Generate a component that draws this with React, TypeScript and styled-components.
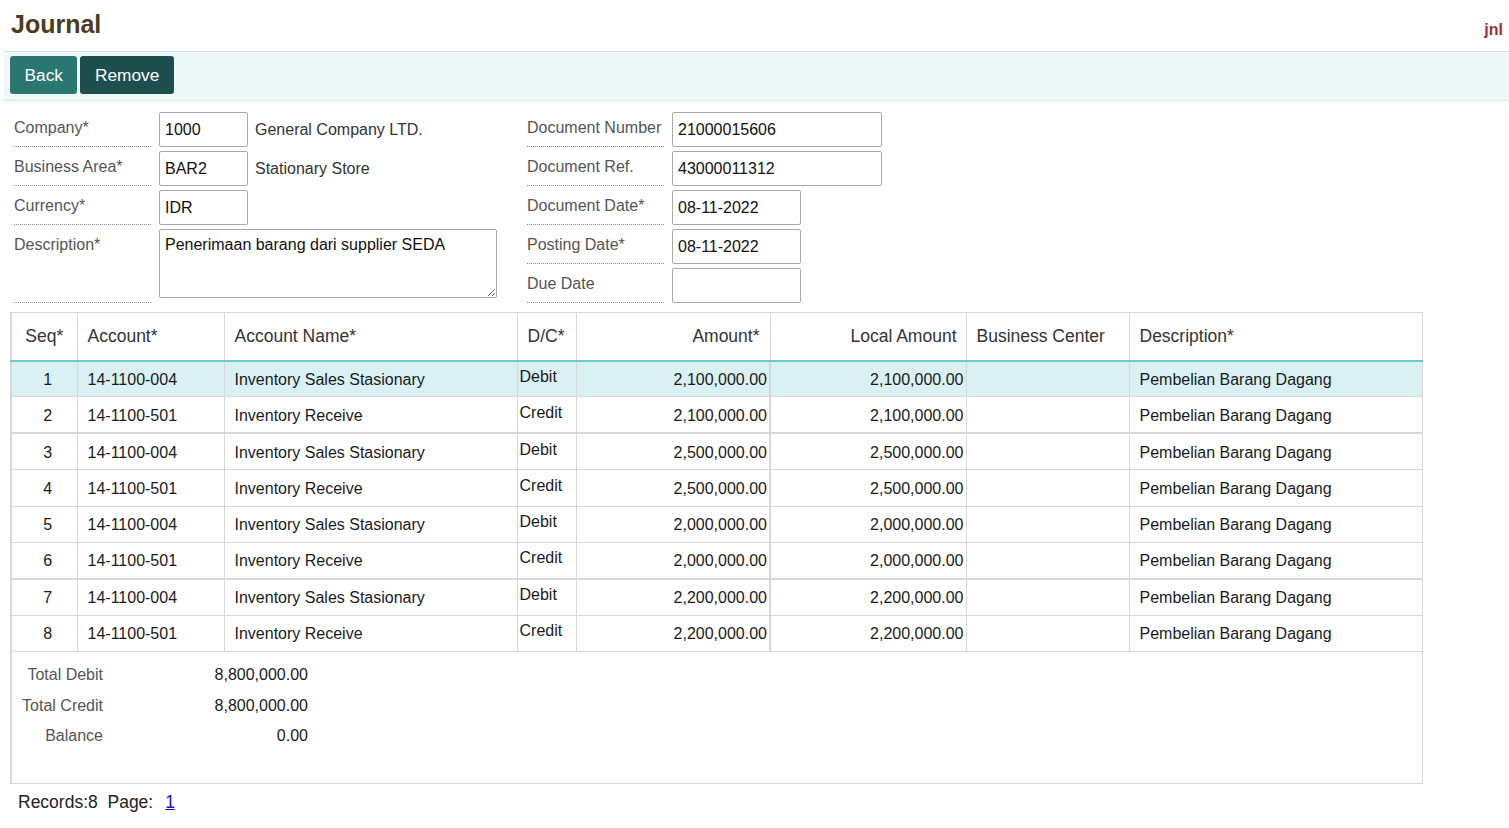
import React from "react";
import styled, { createGlobalStyle } from "styled-components";

const Global = createGlobalStyle`
  html, body { margin: 0; padding: 0; background: #fff; }
  body { font-family: "Liberation Sans", Arial, sans-serif; color: #222; }
  * { box-sizing: border-box; }
`;

const Page = styled.div`
  padding-left: 4px;
`;

const TitleBar = styled.div`
  height: 51px;
  display: flex;
  justify-content: space-between;
  align-items: flex-start;
  padding: 0 6px 0 7px;
`;

const Title = styled.h1`
  margin: 0;
  padding-top: 9px;
  font-size: 25px;
  line-height: 30px;
  font-weight: bold;
  color: #4a3c1c;
`;

const Code = styled.span`
  padding-top: 20px;
  font-size: 16px;
  line-height: 20px;
  font-weight: bold;
  color: #a0302f;
`;

const Toolbar = styled.div`
  display: flex;
  gap: 3px;
  background: #eef8f8;
  border-top: 1px solid #d5e3e3;
  border-bottom: 1px solid #d5e8e8;
  padding: 4px 6px 6px;
`;

const Button = styled.button<{ $dark?: boolean }>`
  height: 38px;
  padding: 0 14.5px;
  border: none;
  border-radius: 3px;
  background: ${(p) => (p.$dark ? "#1e4f4f" : "#2a7772")};
  color: #fff;
  font-family: "Liberation Sans", Arial, sans-serif;
  font-size: 17.3px;
  cursor: pointer;
`;

const Form = styled.div`
  display: flex;
  padding: 11px 0 0 10px;
`;

const Block = styled.div<{ $width?: number }>`
  display: flex;
  flex-direction: column;
  gap: 4px;
  width: ${(p) => (p.$width ? `${p.$width}px` : "auto")};
`;

const Row = styled.div`
  display: flex;
  align-items: flex-start;
`;

const Label = styled.div<{ $width: number; $tall?: boolean }>`
  width: ${(p) => p.$width}px;
  height: ${(p) => (p.$tall ? 74 : 35)}px;
  padding-top: 7px;
  border-bottom: 1px dotted #888;
  font-size: 16px;
  line-height: 18px;
  color: #555;
  flex-shrink: 0;
`;

const Input = styled.input<{ $w: number }>`
  width: ${(p) => p.$w}px;
  height: 35px;
  margin-left: 8px;
  border: 1px solid #a9a9a9;
  border-radius: 2px;
  padding: 0 5px;
  font-family: "Liberation Sans", Arial, sans-serif;
  font-size: 16px;
  color: #111;
  background: #fff;
`;

const TextArea = styled.textarea`
  width: 338px;
  height: 69px;
  margin-left: 8px;
  border: 1px solid #a9a9a9;
  border-radius: 2px;
  padding: 5px 5px;
  font-family: "Liberation Sans", Arial, sans-serif;
  font-size: 16px;
  line-height: 20px;
  color: #111;
`;

const Aside = styled.span`
  margin-left: 7px;
  line-height: 35px;
  font-size: 16px;
  color: #333;
`;

const TableWrap = styled.div`
  margin: 9px 0 0 6px;
  width: 1411px;
`;

const Table = styled.table`
  width: 1410px;
  table-layout: fixed;
  border-collapse: collapse;
  border-left: 2px solid #d8d8d8;
  border-right: 1px solid #d8d8d8;
  border-top: 1px solid #d8d8d8;
  font-size: 16px;
`;

const Th = styled.th<{ $align?: string; $thick?: boolean }>`
  height: 48px;
  padding: 0 10px;
  font-weight: normal;
  font-size: 17.5px;
  color: #333;
  text-align: ${(p) => p.$align || "left"};
  border-left: 1px solid #d8d8d8;
  border-right: ${(p) => (p.$thick ? "2px" : "1px")} solid #d8d8d8;
  border-bottom: 2px solid #6ccaca;
`;

const Tr = styled.tr<{ $selected?: boolean; $group?: boolean }>`
  background: ${(p) => (p.$selected ? "#d9f1f2" : "#fff")};
  & > td {
    border-top: ${(p) => (p.$group ? "2px" : "1px")} solid #d8d8d8;
  }
`;

const Td = styled.td<{ $align?: string; $thick?: boolean; $raise?: boolean }>`
  height: 36.4px;
  padding: ${(p) => (p.$raise ? "0 2px 4px" : "2px 10px 0")};
  text-align: ${(p) => p.$align || "left"};
  color: #1a1a1a;
  border-left: 1px solid #d8d8d8;
  border-right: ${(p) => (p.$thick ? "2px" : "1px")} solid #d8d8d8;
  white-space: nowrap;
`;

const SeqTd = styled(Td)`
  padding: 2px 0 0 7px;
  text-align: center;
`;

const AmountTd = styled(Td)`
  padding: 2px 2px 0 10px;
`;

const FootCell = styled.td`
  height: 132px;
  vertical-align: top;
  border-top: 1px solid #d8d8d8;
  border-bottom: 1px solid #d8d8d8;
  padding: 8px 0 0 0;
`;

const Totals = styled.div`
  display: grid;
  grid-template-columns: 91px 205px;
  grid-auto-rows: 30.5px;
  align-items: center;
`;

const TotalLabel = styled.span`
  text-align: right;
  color: #555;
  font-size: 16px;
`;

const TotalValue = styled.span`
  text-align: right;
  color: #1a1a1a;
  font-size: 16px;
`;

const Pager = styled.div`
  padding: 8px 0 0 8px;
  font-size: 17.5px;
  color: #222;
`;

const PageLink = styled.a`
  color: #1a0dcc;
  text-decoration: underline;
  margin-left: 12px;
`;

type Line = {
  seq: number;
  account: string;
  name: string;
  dc: string;
  amount: string;
  group?: boolean;
};

const lines: Line[] = [
  { seq: 1, account: "14-1100-004", name: "Inventory Sales Stasionary", dc: "Debit", amount: "2,100,000.00" },
  { seq: 2, account: "14-1100-501", name: "Inventory Receive", dc: "Credit", amount: "2,100,000.00" },
  { seq: 3, account: "14-1100-004", name: "Inventory Sales Stasionary", dc: "Debit", amount: "2,500,000.00", group: true },
  { seq: 4, account: "14-1100-501", name: "Inventory Receive", dc: "Credit", amount: "2,500,000.00" },
  { seq: 5, account: "14-1100-004", name: "Inventory Sales Stasionary", dc: "Debit", amount: "2,000,000.00" },
  { seq: 6, account: "14-1100-501", name: "Inventory Receive", dc: "Credit", amount: "2,000,000.00" },
  { seq: 7, account: "14-1100-004", name: "Inventory Sales Stasionary", dc: "Debit", amount: "2,200,000.00", group: true },
  { seq: 8, account: "14-1100-501", name: "Inventory Receive", dc: "Credit", amount: "2,200,000.00" },
];

const cols = [66, 147, 293, 59, 194, 196, 163, 293];

export default function App() {
  return (
    <Page>
      <Global />
      <TitleBar>
        <Title>Journal</Title>
        <Code>jnl</Code>
      </TitleBar>
      <Toolbar>
        <Button>Back</Button>
        <Button $dark>Remove</Button>
      </Toolbar>

      <Form>
        <Block $width={513}>
          <Row>
            <Label $width={137}>Company*</Label>
            <Input $w={89} defaultValue="1000" />
            <Aside>General Company LTD.</Aside>
          </Row>
          <Row>
            <Label $width={137}>Business Area*</Label>
            <Input $w={89} defaultValue="BAR2" />
            <Aside>Stationary Store</Aside>
          </Row>
          <Row>
            <Label $width={137}>Currency*</Label>
            <Input $w={89} defaultValue="IDR" />
          </Row>
          <Row>
            <Label $width={137} $tall>Description*</Label>
            <TextArea defaultValue="Penerimaan barang dari supplier SEDA" />
          </Row>
        </Block>
        <Block>
          <Row>
            <Label $width={137}>Document Number</Label>
            <Input $w={210} defaultValue="21000015606" />
          </Row>
          <Row>
            <Label $width={137}>Document Ref.</Label>
            <Input $w={210} defaultValue="43000011312" />
          </Row>
          <Row>
            <Label $width={137}>Document Date*</Label>
            <Input $w={129} defaultValue="08-11-2022" />
          </Row>
          <Row>
            <Label $width={137}>Posting Date*</Label>
            <Input $w={129} defaultValue="08-11-2022" />
          </Row>
          <Row>
            <Label $width={137}>Due Date</Label>
            <Input $w={129} defaultValue="" />
          </Row>
        </Block>
      </Form>

      <TableWrap>
        <Table>
          <colgroup>
            {cols.map((w, i) => (
              <col key={i} style={{ width: w }} />
            ))}
          </colgroup>
          <thead>
            <tr>
              <Th $align="center">Seq*</Th>
              <Th>Account*</Th>
              <Th>Account Name*</Th>
              <Th>D/C*</Th>
              <Th $align="right">Amount*</Th>
              <Th $align="right" style={{ paddingRight: 9 }}>Local Amount</Th>
              <Th>Business Center</Th>
              <Th>Description*</Th>
            </tr>
          </thead>
          <tbody>
            {lines.map((l) => (
              <Tr key={l.seq} $selected={l.seq === 1} $group={l.group}>
                <SeqTd>{l.seq}</SeqTd>
                <Td>{l.account}</Td>
                <Td>{l.name}</Td>
                <Td $raise>{l.dc}</Td>
                <AmountTd $align="right" $thick>{l.amount}</AmountTd>
                <AmountTd $align="right">{l.amount}</AmountTd>
                <Td></Td>
                <Td>Pembelian Barang Dagang</Td>
              </Tr>
            ))}
          </tbody>
          <tfoot>
            <tr>
              <FootCell colSpan={8}>
                <Totals>
                  <TotalLabel>Total Debit</TotalLabel>
                  <TotalValue>8,800,000.00</TotalValue>
                  <TotalLabel>Total Credit</TotalLabel>
                  <TotalValue>8,800,000.00</TotalValue>
                  <TotalLabel>Balance</TotalLabel>
                  <TotalValue>0.00</TotalValue>
                </Totals>
              </FootCell>
            </tr>
          </tfoot>
        </Table>
        <Pager>
          Records:8&nbsp; Page:
          <PageLink href="#">1</PageLink>
        </Pager>
      </TableWrap>
    </Page>
  );
}
